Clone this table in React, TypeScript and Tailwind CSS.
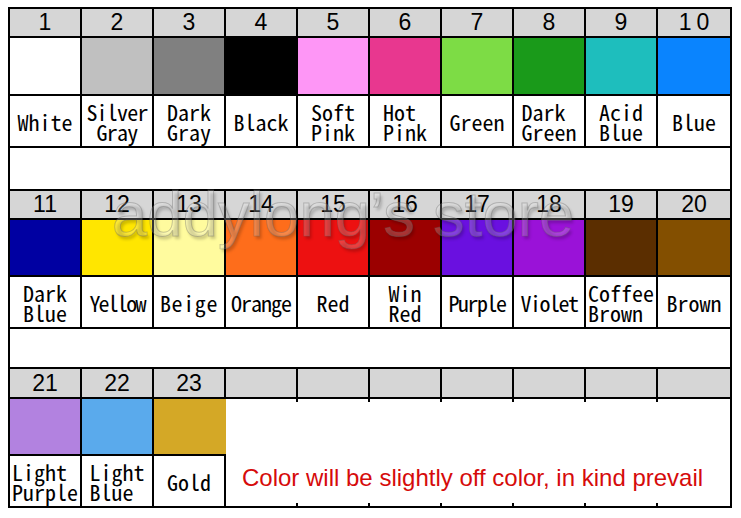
type Item = { n: number; c: string; l: string[]; t?: string };

const row1: Item[] = [
  { n: 1, c: "#ffffff", l: ["White"] },
  { n: 2, c: "#c0c0c0", l: ["Silver", "Gray"], t: "text-center tracking-[-0.8px]" },
  { n: 3, c: "#808080", l: ["Dark", "Gray"] },
  { n: 4, c: "#000000", l: ["Black"] },
  { n: 5, c: "#fe96f6", l: ["Soft", "Pink"] },
  { n: 6, c: "#e8378f", l: ["Hot", "Pink"] },
  { n: 7, c: "#7ddc45", l: ["Green"] },
  { n: 8, c: "#1a9a1a", l: ["Dark", "Green"] },
  { n: 9, c: "#1ebebd", l: ["Acid", "Blue"] },
  { n: 10, c: "#0a84fe", l: ["Blue"] },
];

const row2: Item[] = [
  { n: 11, c: "#0000a2", l: ["Dark", "Blue"] },
  { n: 12, c: "#ffe600", l: ["Yellow"], t: "tracking-[-1.8px]" },
  { n: 13, c: "#fffb9e", l: ["Beige"], t: "tracking-[0.6px]" },
  { n: 14, c: "#fe6d1b", l: ["Orange"], t: "tracking-[-1px]" },
  { n: 15, c: "#ed1111", l: ["Red"] },
  { n: 16, c: "#9b0000", l: ["Win", "Red"] },
  { n: 17, c: "#6a10e0", l: ["Purple"], t: "tracking-[-1.5px]" },
  { n: 18, c: "#9a12d8", l: ["Violet"], t: "tracking-[-1.5px]" },
  { n: 19, c: "#5b2e00", l: ["Coffee", "Brown"] },
  { n: 20, c: "#834f00", l: ["Brown"] },
];

const row3: Item[] = [
  { n: 21, c: "#b282e0", l: ["Light", "Purple"] },
  { n: 22, c: "#5aaaec", l: ["Light", "Blue"] },
  { n: 23, c: "#d4a826", l: ["Gold"] },
];

const label = "font-['Noto_Sans_Mono_CJK_JP','Noto_Sans_CJK_JP','DejaVu_Sans_Mono',monospace] text-[22px] leading-[20px] text-black";
const num = "font-['Liberation_Sans',Arial,sans-serif] text-[23px] text-black";

function Label({ it }: { it: Item }) {
  return (
    <div className={`whitespace-pre ${label} ${it.t ?? "text-left"}`}>
      {it.l.map((s) => (
        <div key={s}>{s}</div>
      ))}
    </div>
  );
}

function Block({ items, hh, sh }: { items: Item[]; hh: string; sh: string }) {
  return (
    <div>
      <div className="grid grid-cols-10">
        {items.map((it, i) => (
          <div key={it.n} className={`${hh} flex items-center justify-center bg-[#d6d6d6] border-b-2 border-black ${num} ${i < 9 ? "border-r-2" : ""} ${it.n === 10 ? "tracking-[5px] pl-[5px]" : ""}`}>
            {it.n}
          </div>
        ))}
      </div>
      <div className="grid grid-cols-10">
        {items.map((it, i) => (
          <div key={it.n} className={`${sh} border-b-2 border-black ${i < 9 ? "border-r-2" : ""}`} style={{ backgroundColor: it.c }} />
        ))}
      </div>
      <div className="grid grid-cols-10">
        {items.map((it, i) => (
          <div key={it.n} className={`h-[52px] flex items-center justify-center border-b-2 border-black ${i < 9 ? "border-r-2" : ""}`}>
            <Label it={it} />
          </div>
        ))}
      </div>
    </div>
  );
}

function Ticks() {
  return (
    <div className="grid grid-cols-7 h-[3px]">
      {[0, 1, 2, 3, 4, 5, 6].map((i) => (
        <div key={i} className={`border-black ${i < 6 ? "border-r-2" : ""}`} />
      ))}
    </div>
  );
}

export default function App() {
  return (
    <div className="w-[741px] h-[518px] bg-white pt-[7px] pl-[8px]">
      <div className="relative w-[724px] border-2 border-black bg-white">
        <Block items={row1} hh="h-[29px]" sh="h-[58px]" />
        <div className="h-[43px] border-b-2 border-black" />
        <Block items={row2} hh="h-[29px]" sh="h-[57px]" />
        <div className="h-[40px] border-b-2 border-black" />

        <div className="grid grid-cols-10">
          {Array.from({ length: 10 }).map((_, i) => (
            <div key={i} className={`h-[30px] flex items-center justify-center bg-[#d6d6d6] border-b-2 border-black ${num} ${i < 9 ? "border-r-2" : ""}`}>
              {row3[i] ? row3[i].n : ""}
            </div>
          ))}
        </div>
        <div className="flex h-[107px]">
          <div className="w-[216px] flex flex-col">
            <div className="flex h-[57px] border-b-2 border-black">
              {row3.map((it, i) => (
                <div key={it.n} className={`w-[72px] border-black ${i < 2 ? "border-r-2" : ""}`} style={{ backgroundColor: it.c }} />
              ))}
            </div>
            <div className="flex h-[50px]">
              {row3.map((it) => (
                <div key={it.n} className="w-[72px] flex items-center justify-center border-r-2 border-black">
                  <Label it={it} />
                </div>
              ))}
            </div>
          </div>
          <div className="flex-1 flex flex-col">
            <Ticks />
            <div className="flex-1 flex items-end pl-[16px] pb-[13px]">
              <span className="font-['Liberation_Sans',Arial,sans-serif] text-[24px] leading-none text-[#d60b0b] whitespace-nowrap">
                Color will be slightly off color, in kind prevail
              </span>
            </div>
            <Ticks />
          </div>
        </div>

        <div className="absolute left-[102px] top-[174px] pointer-events-none whitespace-nowrap font-['Liberation_Sans',Arial,sans-serif] text-[63px] tracking-[0.3px] leading-none text-[rgba(255,255,255,0.2)] [-webkit-text-stroke:1px_rgba(100,100,100,0.35)] [text-shadow:2px_3px_3px_rgba(0,0,0,0.2)]">
          addylong’s store
        </div>
      </div>
    </div>
  );
}
